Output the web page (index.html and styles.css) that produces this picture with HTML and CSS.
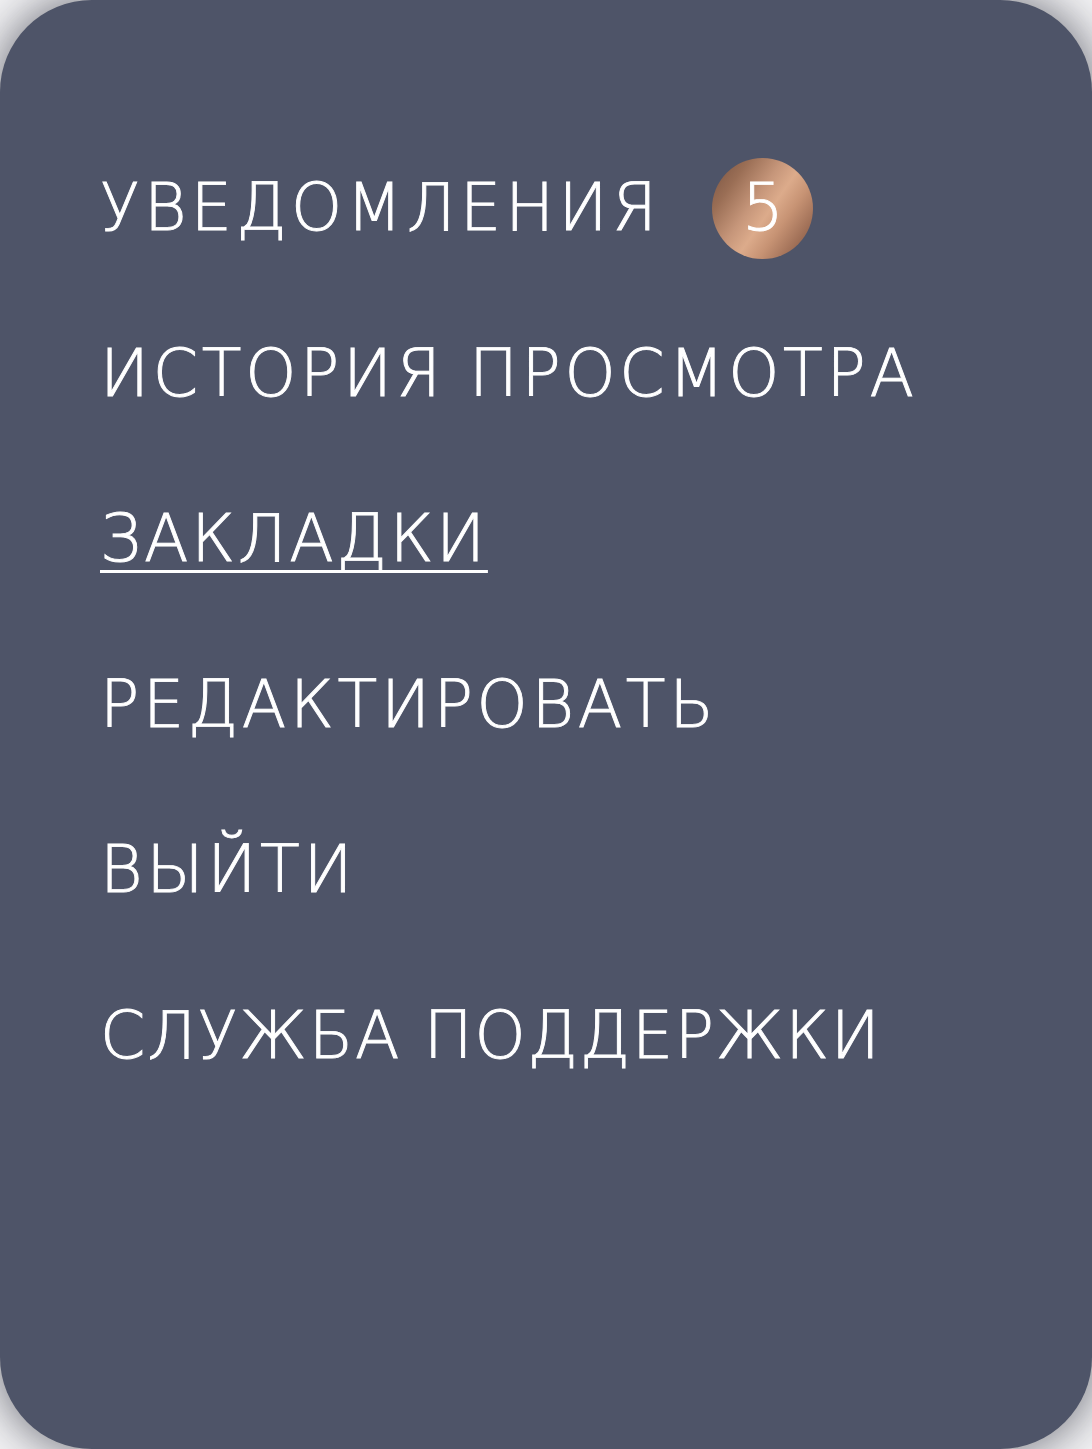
FILE: index.html
```html
<!DOCTYPE html>
<html lang="ru">
<head>
<meta charset="utf-8">
<link rel="stylesheet" href="styles.css">
</head>
<body>
<nav class="card">
  <ul class="menu">
    <li class="item"><a class="link wide" href="#">УВЕДОМЛЕНИЯ</a><span class="badge">5</span></li>
    <li class="item"><a class="link" href="#">ИСТОРИЯ ПРОСМОТРА</a></li>
    <li class="item"><a class="link active" href="#">ЗАКЛАДКИ</a></li>
    <li class="item"><a class="link" href="#">РЕДАКТИРОВАТЬ</a></li>
    <li class="item"><a class="link" href="#">ВЫЙТИ</a></li>
    <li class="item"><a class="link tight" href="#">СЛУЖБА ПОДДЕРЖКИ</a></li>
  </ul>
</nav>
</body>
</html>
```
FILE: styles.css
```css
html, body {
  margin: 0;
  padding: 0;
  height: 100%;
  background: #f2f2f4;
  overflow: hidden;
}
.card {
  box-sizing: border-box;
  width: 1092px;
  height: 1449px;
  background: #4e5468;
  border-radius: 92px;
  box-shadow: 0 0 40px 6px rgba(40, 42, 55, 0.55);
  padding: 168px 0 0 100px;
}
.menu {
  list-style: none;
  margin: 0;
  padding: 0;
  display: flex;
  flex-direction: column;
  gap: 85.5px;
}
.item {
  height: 80px;
  display: flex;
  align-items: center;
  font-family: "DejaVu Sans", sans-serif;
  font-weight: 300;
  font-size: 65px;
  line-height: 80px;
  letter-spacing: 3.7px;
  color: #fff;
  white-space: nowrap;
}
.link {
  color: #fff;
  text-decoration: none;
  -webkit-text-stroke: 0.9px #fff;
}
.link.wide {
  letter-spacing: 4.3px;
}
.link.tight {
  letter-spacing: 1.8px;
}
.link.active {
  letter-spacing: 2.7px;
  text-decoration: underline;
  text-decoration-thickness: 3px;
  text-underline-offset: 9px;
  text-decoration-skip-ink: none;
}
.badge {
  flex: none;
  width: 101px;
  height: 101px;
  border-radius: 50%;
  margin-left: 51px;
  display: flex;
  align-items: center;
  justify-content: center;
  color: #fff;
  -webkit-text-stroke: 0.9px #fff;
  letter-spacing: 0;
  background: linear-gradient(125deg, #75503f 0%, #9a6e55 22%, #c6967a 42%, #dcab8b 55%, #c79374 68%, #9d6d55 85%, #8a5d47 100%);
}
```
